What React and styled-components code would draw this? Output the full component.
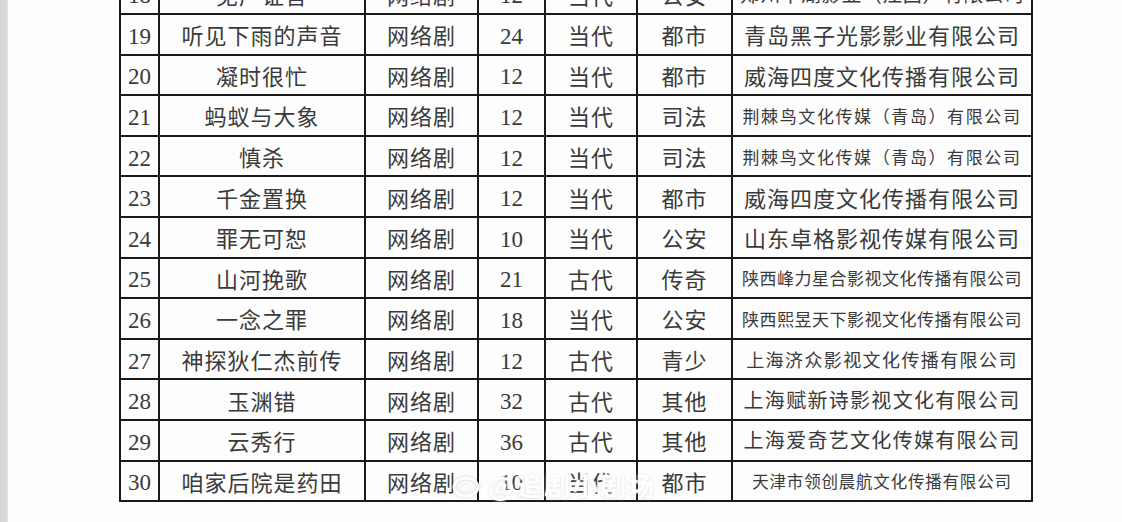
import React from "react";
import styled, { createGlobalStyle } from "styled-components";

const Global = createGlobalStyle`
  html, body { margin: 0; padding: 0; background: #fdfdfd; }
  body { font-family: "Liberation Serif", "Noto Sans CJK SC", serif; }
`;

const Page = styled.div`
  display: flex;
  width: 1122px;
  height: 522px;
  overflow: hidden;
  background: #fdfdfd;
  position: relative;
`;

const Edge = styled.div`
  width: 8px;
  flex: none;
  background: linear-gradient(to right, #d6d6d6 0, #dadada 6px, #e8e8e8 8px);
`;

const Sheet = styled.div`
  flex: 1;
  padding-left: 111px;
  overflow: hidden;
`;

const Table = styled.table`
  border-collapse: collapse;
  table-layout: fixed;
  width: 912px;
  margin-top: -27.6px;
  border: 2px solid #151515;
`;

const Row = styled.tr`
  height: 40.6px;
`;

const Cell = styled.td`
  border: 2px solid #1a1a1a;
  padding: ${(p) => (p.$num ? "4px 0 0" : "0")};
  text-align: center;
  vertical-align: middle;
  white-space: nowrap;
  overflow: hidden;
  color: #3a3a3a;
  font-family: ${(p) =>
    p.$num ? `"Liberation Serif", serif` : `"Noto Sans CJK SC", sans-serif`};
  font-size: ${(p) => p.$size || (p.$num ? 23 : 22)}px;
  letter-spacing: ${(p) => (p.$num ? 0 : p.$ls ?? 1)}px;
  line-height: 1;
`;

const Watermark = styled.div`
  position: absolute;
  left: 452px;
  top: 466px;
  display: flex;
  align-items: center;
  gap: 6px;
  color: rgba(255, 255, 255, 0.95);
  font-family: "Noto Sans CJK SC", sans-serif;
  font-size: 26px;
  font-weight: 700;
  letter-spacing: 2px;
  text-shadow: 0 0 3px rgba(255, 255, 255, 0.9), 0 0 2px rgba(0, 0, 0, 0.15),
    0 1px 3px rgba(0, 0, 0, 0.1);
  filter: blur(0.7px);
`;

const Logo = styled.svg`
  width: 30px;
  height: 30px;
  filter: drop-shadow(0 0 1.5px rgba(0, 0, 0, 0.2));
`;

const rows = [
  ["18", "见产证言", "12", "当代", "公安", "郑州平湖影业（江西）有限公司", 20, 0.3],
  ["19", "听见下雨的声音", "24", "当代", "都市", "青岛黑子光影影业有限公司", 22, 1],
  ["20", "凝时很忙", "12", "当代", "都市", "威海四度文化传播有限公司", 22, 1],
  ["21", "蚂蚁与大象", "12", "当代", "司法", "荆棘鸟文化传媒（青岛）有限公司", 17, 1.6],
  ["22", "慎杀", "12", "当代", "司法", "荆棘鸟文化传媒（青岛）有限公司", 17, 1.6],
  ["23", "千金置换", "12", "当代", "都市", "威海四度文化传播有限公司", 22, 1],
  ["24", "罪无可恕", "10", "当代", "公安", "山东卓格影视传媒有限公司", 22, 1],
  ["25", "山河挽歌", "21", "古代", "传奇", "陕西峰力星合影视文化传播有限公司", 17, 0.5],
  ["26", "一念之罪", "18", "当代", "公安", "陕西熙昱天下影视文化传播有限公司", 17, 0.5],
  ["27", "神探狄仁杰前传", "12", "古代", "青少", "上海济众影视文化传播有限公司", 18, 1.4],
  ["28", "玉渊错", "32", "古代", "其他", "上海赋新诗影视文化有限公司", 20, 1.3],
  ["29", "云秀行", "36", "古代", "其他", "上海爱奇艺文化传媒有限公司", 20, 1.3],
  ["30", "咱家后院是药田", "10", "当代", "都市", "天津市领创晨航文化传播有限公司", 16.5, 0.8],
];

export default function App() {
  return (
    <Page>
      <Global />
      <Edge />
      <Sheet>
        <Table>
          <colgroup>
            <col style={{ width: 39 }} />
            <col style={{ width: 206 }} />
            <col style={{ width: 113 }} />
            <col style={{ width: 67 }} />
            <col style={{ width: 92 }} />
            <col style={{ width: 95 }} />
            <col style={{ width: 300 }} />
          </colgroup>
          <tbody>
            {rows.map(([n, title, eps, era, genre, co, size, ls]) => (
              <Row key={n}>
                <Cell $num>{n}</Cell>
                <Cell>{title}</Cell>
                <Cell>网络剧</Cell>
                <Cell $num>{eps}</Cell>
                <Cell>{era}</Cell>
                <Cell>{genre}</Cell>
                <Cell $size={size} $ls={ls}>{co}</Cell>
              </Row>
            ))}
          </tbody>
        </Table>
      </Sheet>
      <Watermark>
        <Logo viewBox="0 0 30 30">
          <ellipse cx="14" cy="17" rx="12" ry="9" fill="none" stroke="rgba(255,255,255,0.95)" strokeWidth="3" />
          <ellipse cx="13" cy="18" rx="4" ry="3" fill="rgba(255,255,255,0.95)" />
        </Logo>
        <span>@追剧小剧场</span>
      </Watermark>
    </Page>
  );
}
